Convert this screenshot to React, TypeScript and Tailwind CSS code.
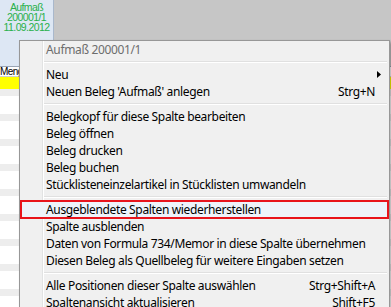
import React from "react";

const font = { fontFamily: '"Noto Sans", "Open Sans", sans-serif', letterSpacing: "-0.35px" };
const small = { fontFamily: '"Liberation Sans", Arial, sans-serif', letterSpacing: "-0.6px" };

function Sep() {
  return (
    <div className="h-[8px] flex items-center pl-[24px] pr-[2px]">
      <div className="w-full">
        <div className="h-px bg-[#e0e0e0]" />
        <div className="h-px bg-white" />
      </div>
    </div>
  );
}

function Item({
  label,
  shortcut,
  arrow,
  highlight,
}: {
  label: string;
  shortcut?: string;
  arrow?: boolean;
  highlight?: boolean;
}) {
  return (
    <div
      className={
        "relative h-[17px] flex items-center pl-[26px] pr-[14px] text-black " +
        (highlight ? "bg-[#eef3fa]" : "")
      }
    >
      <span className="flex-1 whitespace-nowrap">{label}</span>
      {shortcut && <span className="whitespace-nowrap">{shortcut}</span>}
      {arrow && (
        <svg width="4" height="7" viewBox="0 0 4 7" className="absolute right-[8px] top-[5px]">
          <path d="M0 0 L4 3.5 L0 7 Z" fill="#000" />
        </svg>
      )}
      {highlight && (
        <div className="absolute left-0 right-0 top-[-1px] bottom-[-1px] border-2 border-[#e8141c]" />
      )}
    </div>
  );
}

export default function App() {
  const rows = Array.from({ length: 9 });
  return (
    <div className="relative w-[391px] h-[307px] overflow-hidden bg-white" style={font}>
      {/* background grid */}
      <div className="flex h-[66px]">
        <div
          className="w-[54px] h-full bg-[#dde7f4] border-r border-[#a9b8cc] flex flex-col items-center pt-[2px] text-[10.5px] leading-[10px] text-[#28b04a]"
          style={small}
        >
          <span>Aufmaß</span>
          <span>200001/1</span>
          <span>11.09.2012</span>
        </div>
        <div className="flex-1 bg-[#c6c6c6]" />
      </div>
      <div
        className="h-[11px] border-t border-[#9aa5b5] border-b border-b-[#d0d0d0] text-[10px] leading-[9px] text-black whitespace-nowrap"
        style={small}
      >
        Menge
      </div>
      <div className="h-[12px] bg-[#ffff00]" />
      {rows.map((_, i) => (
        <div key={i}>
          <div className="h-[7px] bg-[#ededed]" />
          <div className="h-[18px] bg-white" />
        </div>
      ))}

      {/* context menu */}
      <div className="absolute left-[19px] top-[40px] w-[371px] h-[280px] bg-[#f0f0f0] border border-[#979797] text-[12px] shadow-[2px_2px_3px_rgba(0,0,0,0.3)]">
        <div className="absolute left-[22px] top-0 bottom-0 w-px bg-[#e2e3e3]" />
        <div className="absolute left-[23px] top-0 bottom-0 w-px bg-white" />
        <div className="relative">
          <div className="h-[17px] flex items-center pl-[26px] text-[#6d6d6d]">Aufmaß 200001/1</div>
          <Sep />
          <Item label="Neu" arrow />
          <Item label="Neuen Beleg 'Aufmaß' anlegen" shortcut="Strg+N" />
          <Sep />
          <Item label="Belegkopf für diese Spalte bearbeiten" />
          <Item label="Beleg öffnen" />
          <Item label="Beleg drucken" />
          <Item label="Beleg buchen" />
          <Item label="Stücklisteneinzelartikel in Stücklisten umwandeln" />
          <Sep />
          <Item label="Ausgeblendete Spalten wiederherstellen" highlight />
          <Item label="Spalte ausblenden" />
          <Item label="Daten von Formula 734/Memor in diese Spalte übernehmen" />
          <Item label="Diesen Beleg als Quellbeleg für weitere Eingaben setzen" />
          <Sep />
          <Item label="Alle Positionen dieser Spalte auswählen" shortcut="Strg+Shift+A" />
          <Item label="Spaltenansicht aktualisieren" shortcut="Shift+F5" />
        </div>
      </div>
    </div>
  );
}
